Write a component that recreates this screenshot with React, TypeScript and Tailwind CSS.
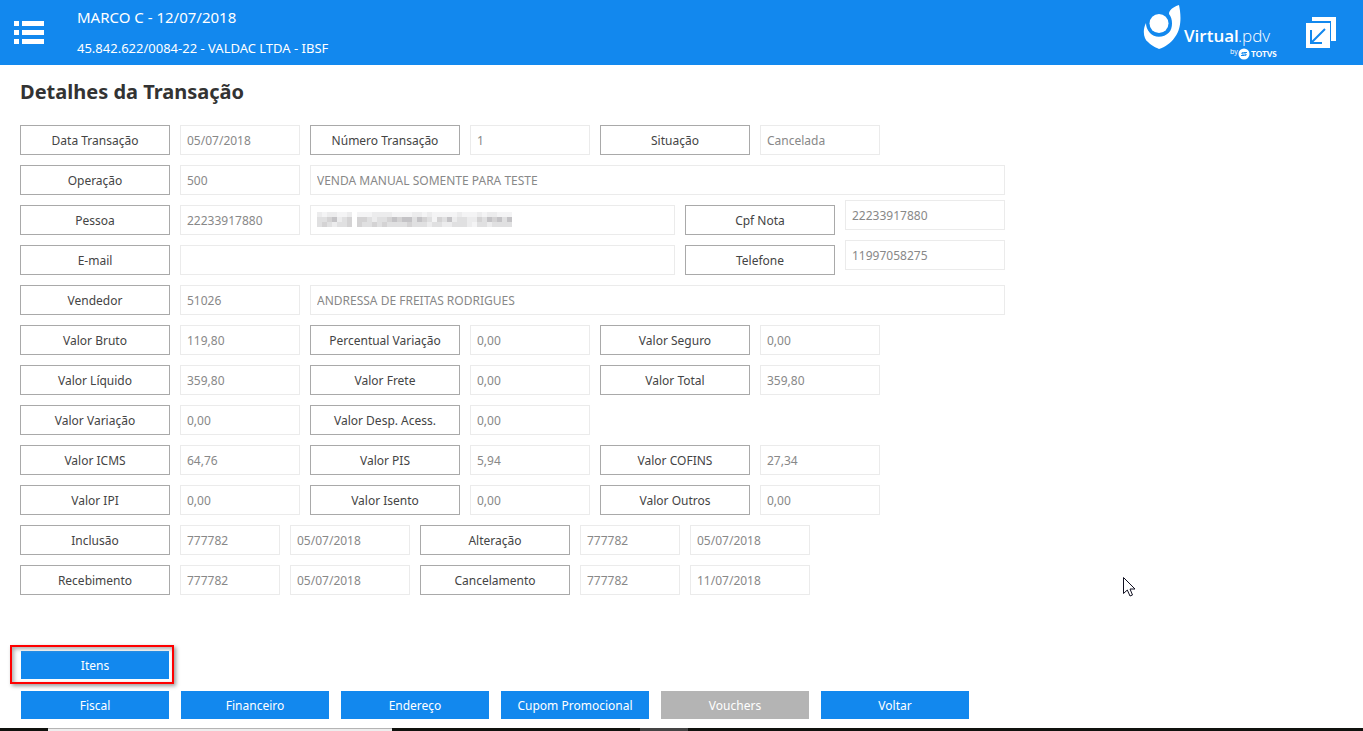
import { useId } from 'react'

type Cell =
  | { kind: 'label'; text: string }
  | { kind: 'value'; text: string; width: string; name: string; raised?: boolean; masked?: boolean }

const label = (text: string): Cell => ({ kind: 'label', text })

const value = (name: string, text: string, width = 'w-[120px]', extra = {}): Cell => ({
  kind: 'value',
  name,
  text,
  width,
  ...extra,
})

const rows: Cell[][] = [
  [
    label('Data Transação'), value('Data Transação', '05/07/2018'),
    label('Número Transação'), value('Número Transação', '1'),
    label('Situação'), value('Situação', 'Cancelada'),
  ],
  [label('Operação'), value('Operação', '500'), value('Descrição Operação', 'VENDA MANUAL SOMENTE PARA TESTE', 'w-[695px]')],
  [
    label('Pessoa'), value('Pessoa', '22233917880'), value('Nome Pessoa', '', 'w-[365px]', { masked: true }),
    label('Cpf Nota'), value('Cpf Nota', '22233917880', 'w-[160px]', { raised: true }),
  ],
  [
    label('E-mail'), value('E-mail', '', 'w-[495px]'),
    label('Telefone'), value('Telefone', '11997058275', 'w-[160px]', { raised: true }),
  ],
  [label('Vendedor'), value('Vendedor', '51026'), value('Nome Vendedor', 'ANDRESSA DE FREITAS RODRIGUES', 'w-[695px]')],
  [
    label('Valor Bruto'), value('Valor Bruto', '119,80'),
    label('Percentual Variação'), value('Percentual Variação', '0,00'),
    label('Valor Seguro'), value('Valor Seguro', '0,00'),
  ],
  [
    label('Valor Líquido'), value('Valor Líquido', '359,80'),
    label('Valor Frete'), value('Valor Frete', '0,00'),
    label('Valor Total'), value('Valor Total', '359,80'),
  ],
  [
    label('Valor Variação'), value('Valor Variação', '0,00'),
    label('Valor Desp. Acess.'), value('Valor Desp. Acess.', '0,00'),
  ],
  [
    label('Valor ICMS'), value('Valor ICMS', '64,76'),
    label('Valor PIS'), value('Valor PIS', '5,94'),
    label('Valor COFINS'), value('Valor COFINS', '27,34'),
  ],
  [
    label('Valor IPI'), value('Valor IPI', '0,00'),
    label('Valor Isento'), value('Valor Isento', '0,00'),
    label('Valor Outros'), value('Valor Outros', '0,00'),
  ],
  [
    label('Inclusão'), value('Inclusão', '777782', 'w-[100px]'), value('Data Inclusão', '05/07/2018'),
    label('Alteração'), value('Alteração', '777782', 'w-[100px]'), value('Data Alteração', '05/07/2018'),
  ],
  [
    label('Recebimento'), value('Recebimento', '777782', 'w-[100px]'), value('Data Recebimento', '05/07/2018'),
    label('Cancelamento'), value('Cancelamento', '777782', 'w-[100px]'), value('Data Cancelamento', '11/07/2018'),
  ],
]

// Grey levels of the hidden name, one digit per 5px tile (0 = white)
const mask = [
  '212211201112222111122121111121112122111',
  '334523404432334545535431435233224354535',
  '343233404334343333433323322333213323333',
]
const tones = ['#ffffff', '#f4f4f5', '#ececed', '#e0e0e1', '#d4d3d4', '#c4c3c6']

function MaskedText() {
  return (
    <svg width="195" height="15" viewBox="0 0 195 15" shapeRendering="crispEdges" aria-hidden="true">
      {mask.map((line, y) =>
        line.split('').map((tone, x) => (
          <rect key={`${x}-${y}`} x={x * 5} y={y * 5} width="5" height="5" fill={tones[Number(tone)]} />
        ))
      )}
    </svg>
  )
}

function FieldRow({ cells }: { cells: Cell[] }) {
  const id = useId()

  return (
    <div className="flex gap-2.5">
      {cells.map((cell, i) => {
        if (cell.kind === 'label') {
          return (
            <label
              key={i}
              htmlFor={`${id}-${i + 1}`}
              className="flex h-[30px] w-[150px] shrink-0 items-center justify-center border border-[#a9a9a9] pt-0.5 text-[#444]"
            >
              {cell.text}
            </label>
          )
        }

        return (
          <div key={i} className={`relative h-[30px] shrink-0 ${cell.width} ${cell.raised ? '-mt-[5px]' : ''}`}>
            <input
              id={`${id}-${i}`}
              aria-label={cell.name}
              readOnly
              value={cell.text}
              className="h-full w-full border border-[#ebebeb] px-1.5 text-[#888] outline-none"
            />
            {cell.masked && (
              <div className="absolute top-[7px] left-[7px]">
                <MaskedText />
              </div>
            )}
          </div>
        )
      })}
    </div>
  )
}

function Logo() {
  return (
    <svg width="139" height="56" viewBox="0 0 139 56" role="img" aria-label="Virtual.pdv by TOTVS">
      <path
        d="M36 0 C30 2 26 5 26 9 C30 14 30 23 26 27.5 C21 33 11 33 7 28 C4 25 3 21 3 18 C-1 26 1 34 5 37 C9 41 14 43 16 44 C22 42 28 38 32 32 C39 23 38 9 36 0Z"
        fill="#fff"
      />
      <circle cx="16" cy="18.5" r="9.5" fill="#fff" />
      <text x="41" y="37" fill="#fff" fontFamily="'Open Sans', sans-serif" fontSize="17" fontWeight="600">Virtual</text>
      <text x="95" y="37" fill="#fff" fontFamily="'Open Sans', sans-serif" fontSize="17" fontWeight="300">.pdv</text>
      <text x="87" y="49" fill="#fff" fontFamily="'Open Sans', sans-serif" fontSize="7">by</text>
      <circle cx="101" cy="49" r="5.5" fill="#fff" />
      <path d="M104 47.5 H100.5 Q98 47.5 99 49 L103 49 Q104 50.5 101.5 50.5 H98" fill="none" stroke="#1288ee" />
      <text x="108" y="52" fill="#fff" fontFamily="Lato, sans-serif" fontSize="8" fontWeight="900">TOTVS</text>
    </svg>
  )
}

const buttonClass = 'h-[28px] w-[148px] bg-[#1288ee] pt-0.5 text-white disabled:bg-[#b4b4b4]'

export default function App() {
  return (
    <div className="flex min-h-screen flex-col bg-white font-['Noto_Sans',sans-serif] text-xs">
      <header className="flex h-[65px] items-center bg-[#1288ee] text-white">
        <button aria-label="Menu" className="ml-3.5">
          <svg width="30" height="23" viewBox="0 0 30 23" fill="#fff" shapeRendering="crispEdges">
            <path d="M0 0h5v5H0zM8 0h22v5H8zM0 9h5v5H0zM8 9h22v5H8zM0 18h5v5H0zM8 18h22v5H8z" />
          </svg>
        </button>
        <div className="ml-[33px] flex flex-col gap-3">
          <p className="text-[15px] leading-[18px]">MARCO C - 12/07/2018</p>
          <p className="text-[13px] leading-5">45.842.622/0084-22 - VALDAC LTDA - IBSF</p>
        </div>
        <div className="mr-[27px] ml-auto flex items-center gap-6">
          <Logo />
          <button aria-label="Restaurar janela">
            <svg width="30" height="31" viewBox="0 0 30 31" fill="none">
              <path d="M6 0H30V24H25V4H6Z" fill="#fff" />
              <path d="M0 6H24V31H0Z" fill="#fff" />
              <path d="M19 12 L6 25 M5 13 V26 H16" stroke="#1288ee" strokeWidth="2" />
            </svg>
          </button>
        </div>
      </header>

      <main className="px-5">
        <h1 className="mt-3 text-xl leading-[30px] font-bold text-[#333]">Detalhes da Transação</h1>
        <form className="mt-[18px] flex flex-col gap-2.5">
          {rows.map((cells, i) => (
            <FieldRow key={i} cells={cells} />
          ))}
        </form>

        <div className="relative mt-14 ml-px w-[148px]">
          <button className={buttonClass}>Itens</button>
          <div className="pointer-events-none absolute -top-1.5 -left-[11px] h-[39px] w-[164px] border-2 border-[#f00] shadow-[2px_2px_4px_#999,inset_2px_2px_4px_#aaa]" />
        </div>
        <div className="mt-3 ml-px flex gap-3">
          <button className={buttonClass}>Fiscal</button>
          <button className={buttonClass}>Financeiro</button>
          <button className={buttonClass}>Endereço</button>
          <button className={buttonClass}>Cupom Promocional</button>
          <button className={buttonClass} disabled>Vouchers</button>
          <button className={buttonClass}>Voltar</button>
        </div>
      </main>

      <footer className="mt-auto flex h-[3px] bg-[#10120e]">
        <div className="ml-12 w-[344px] border-t border-[#b4b4b4] bg-[#eee]" />
        <div className="ml-[248px] w-12 bg-[#444]" />
      </footer>

      {/* Mouse pointer */}
      <svg className="pointer-events-none absolute top-[577px] left-[1123px]" width="13" height="20" viewBox="0 0 13 20" aria-hidden="true">
        <path d="M.5 .5V16.5L4.3 13L7 19L9.5 18L7 12H12Z" fill="#fff" stroke="#112" />
      </svg>
    </div>
  )
}
